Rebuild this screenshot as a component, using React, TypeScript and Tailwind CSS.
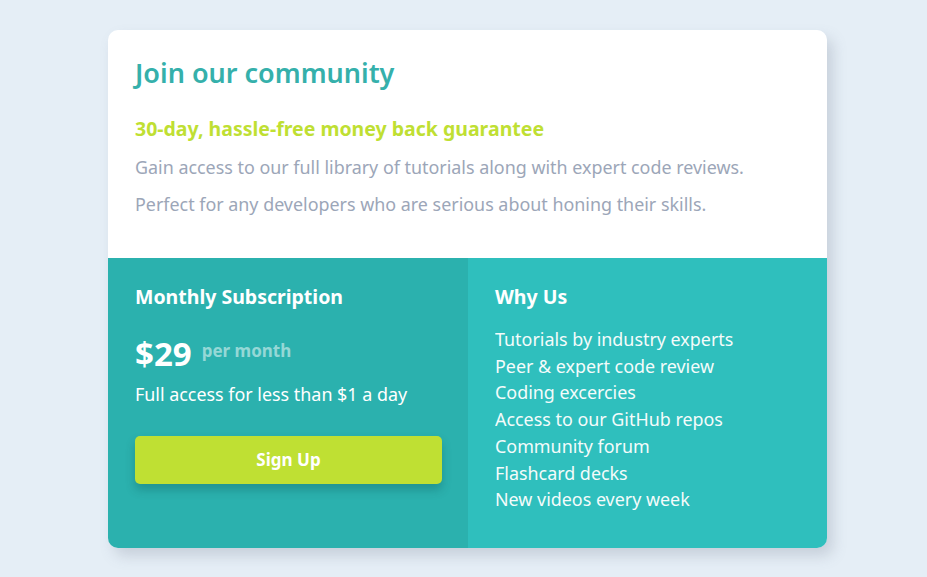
export default function App() {
  const items = [
    "Tutorials by industry experts",
    "Peer & expert code review",
    "Coding excercies",
    "Access to our GitHub repos",
    "Community forum",
    "Flashcard decks",
    "New videos every week",
  ];
  return (
    <div
      className="min-h-[577px] w-full bg-[#e5eef6] flex justify-center pt-[30px] pl-[8px]"
      style={{ fontFamily: '"Noto Sans", sans-serif' }}
    >
      <div className="w-[719px] h-[518px] rounded-[10px] overflow-hidden shadow-[6px_8px_14px_rgba(110,120,140,0.25)] flex flex-col">
        <div className="bg-white h-[228px] px-[27px] pt-[27px]">
          <h1 className="text-[27px] font-semibold text-[#35b0ab] leading-[32px]">Join our community</h1>
          <h2 className="mt-[28px] text-[19.5px] font-bold text-[#bfdf33] leading-[24px]">
            30-day, hassle-free money back guarantee
          </h2>
          <p className="mt-[13px] text-[17.9px] text-[#9ca6b8] leading-[26px]">
            Gain access to our full library of tutorials along with expert code reviews.
          </p>
          <p className="mt-[11px] text-[17.9px] text-[#9ca6b8] leading-[26px]">
            Perfect for any developers who are serious about honing their skills.
          </p>
        </div>
        <div className="flex flex-1">
          <div className="w-[360px] bg-[#2bb1ae] px-[27px] pt-[26px] text-white">
            <h3 className="text-[19.5px] font-bold leading-[26px]">Monthly Subscription</h3>
            <div className="mt-[26px] flex items-center gap-[10px]">
              <span className="text-[33px] font-bold leading-[36px]">$29</span>
              <span className="text-[17px] font-bold text-white/50 leading-[20px] -mt-[6px]">per month</span>
            </div>
            <p className="mt-[9px] text-[17.9px] leading-[26px]">Full access for less than $1 a day</p>
            <button className="mt-[29px] w-[307px] h-[48px] rounded-[5px] bg-[#bfe033] text-white text-[17px] font-bold shadow-[0_6px_10px_rgba(0,60,60,0.25)]">
              Sign Up
            </button>
          </div>
          <div className="flex-1 bg-[#2fbfbd] px-[27px] pt-[26px] text-white">
            <h3 className="text-[19.5px] font-bold leading-[26px]">Why Us</h3>
            <ul className="mt-[16px] text-[17.9px] leading-[26.7px] opacity-95">
              {items.map((t) => (
                <li key={t}>{t}</li>
              ))}
            </ul>
          </div>
        </div>
      </div>
    </div>
  );
}
